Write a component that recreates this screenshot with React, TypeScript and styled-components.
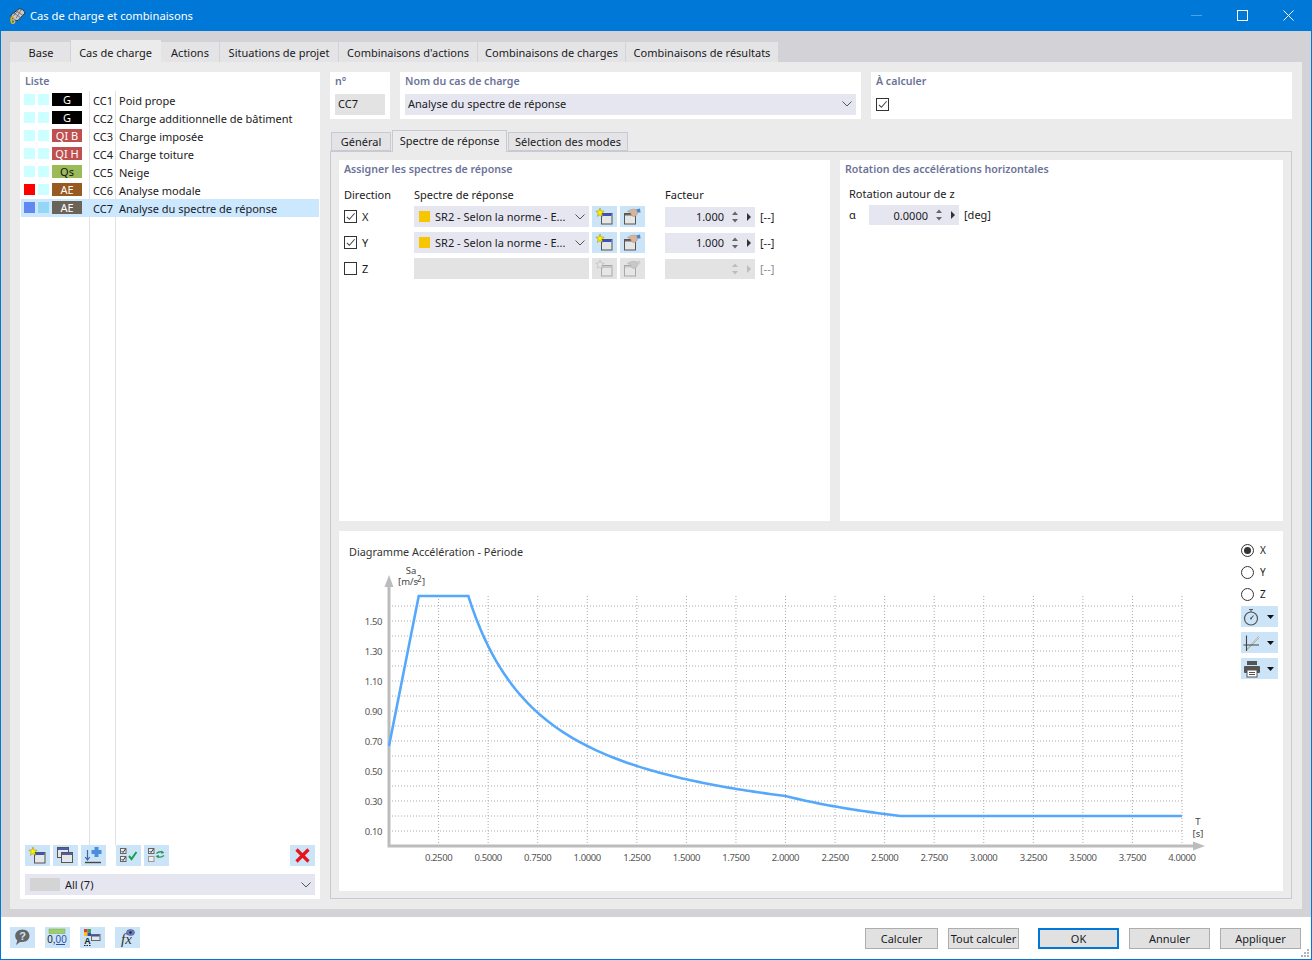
import { ReactNode } from 'react';
import { createGlobalStyle, styled } from 'styled-components';

const GlobalStyle = createGlobalStyle`
  html, body {
    margin: 0;
    padding: 0;
    background: #fff;
  }
  * {
    box-sizing: border-box;
  }
  body {
    font-family: "Noto Sans", "Liberation Sans", sans-serif;
    font-size: 11px;
    color: #1a1a22;
  }
`;

const Window = styled.div`
  width: 1312px;
  height: 960px;
  display: flex;
  flex-direction: column;
  border: 1px solid #0078d7;
  border-top: 0;
  overflow: hidden;
`;

const TitleBar = styled.div`
  height: 31px;
  flex: none;
  background: #0078d7;
  color: #fff;
  display: flex;
  align-items: center;
  padding-left: 7px;
  font-size: 11.2px;
`;

const TitleText = styled.span`
  margin-left: 4px;
  flex: 1;
`;

const WinControl = styled.div`
  width: 46px;
  height: 31px;
  display: flex;
  align-items: center;
  justify-content: center;
`;

const Body = styled.div`
  flex: 1;
  background: #d2d2d7;
  padding: 9px 9px 8px;
  display: flex;
  flex-direction: column;
  min-height: 0;
`;

const TabBar = styled.div`
  display: flex;
  align-items: flex-end;
  height: 22px;
  flex: none;
`;

const Tab = styled.div<{ $active?: boolean; $w: number }>`
  width: ${(p) => p.$w}px;
  height: ${(p) => (p.$active ? 22 : 20)}px;
  background: ${(p) => (p.$active ? '#ebebeb' : '#e4e4e6')};
  border-right: 1px solid ${(p) => (p.$active ? '#ebebeb' : '#d2d2d7')};
  padding-top: ${(p) => (p.$active ? 2 : 0)}px;
  display: flex;
  align-items: center;
  justify-content: center;
  white-space: nowrap;
  &:first-child {
    padding-left: 2px;
  }
`;

const MainPanel = styled.div`
  flex: 1;
  min-height: 0;
  background: #ebebeb;
  padding: 10px;
  display: flex;
  gap: 10px;
`;

const ListCard = styled.div`
  width: 300px;
  flex: none;
  background: #fff;
  display: flex;
  flex-direction: column;
  padding: 1px 1px 4px;
`;

const GroupTitle = styled.div`
  color: #6c7398;
  font-weight: 600;
  font-size: 10.6px;
  line-height: 16px;
  white-space: nowrap;
`;

const ListTitle = styled(GroupTitle)`
  padding: 0 0 0 4px;
  height: 18px;
`;

const ListArea = styled.div`
  flex: 1;
  min-height: 0;
  background-image: linear-gradient(#e2e2e2, #e2e2e2), linear-gradient(#e2e2e2, #e2e2e2);
  background-size: 1px 100%, 1px 100%;
  background-position: 68px 0, 94px 0;
  background-repeat: no-repeat;
`;

const ListRow = styled.div<{ $selected?: boolean }>`
  height: 18px;
  display: flex;
  align-items: center;
  padding-left: 3px;
  background: ${(p) => (p.$selected ? '#cce8ff' : 'transparent')};
  white-space: nowrap;
`;

const Swatch = styled.span<{ $color: string }>`
  width: 11px;
  height: 11px;
  margin: 0 3px 1px 0;
  flex: none;
  background: ${(p) => p.$color};
`;

const Badge = styled.span<{ $bg: string; $fg: string }>`
  width: 30px;
  height: 13px;
  margin-bottom: 1px;
  flex: none;
  background: ${(p) => p.$bg};
  color: ${(p) => p.$fg};
  display: flex;
  align-items: center;
  justify-content: center;
  line-height: 13px;
`;

const RowCode = styled.span`
  width: 26px;
  margin-left: 11px;
  flex: none;
`;

const ListTools = styled.div`
  display: flex;
  align-items: center;
  height: 21px;
  margin: 0 4px 8px;
`;

const ToolGroup = styled.div<{ $push?: boolean }>`
  display: flex;
  gap: 3px;
  margin-right: 10px;
  ${(p) => (p.$push ? 'margin: 0 0 0 auto;' : '')}
`;

const IconBtn = styled.div<{ $disabled?: boolean }>`
  width: 25px;
  height: 21px;
  flex: none;
  background: ${(p) => (p.$disabled ? '#e3e3e3' : '#cbe4f8')};
  display: flex;
  align-items: center;
  justify-content: center;
`;

const FilterSelect = styled.div`
  height: 21px;
  margin: 0 4px;
  background: #e6e6f0;
  display: flex;
  align-items: center;
  padding: 0 3px 0 5px;
`;

const FilterSwatch = styled.span`
  width: 30px;
  height: 13px;
  background: #d4d4d4;
  margin-right: 5px;
`;

const Grow = styled.span`
  flex: 1;
  white-space: nowrap;
  overflow: hidden;
`;

const RightColumn = styled.div`
  flex: 1;
  min-width: 0;
  display: flex;
  flex-direction: column;
`;

const HeaderRow = styled.div`
  height: 47px;
  flex: none;
  display: flex;
  gap: 10px;
`;

const HeaderCard = styled.div<{ $w?: number }>`
  ${(p) => (p.$w ? `width: ${p.$w}px; flex: none;` : 'flex: 1;')}
  background: #fff;
  padding: 1px 5px 0;
`;

const Field = styled.div<{ $disabled?: boolean }>`
  height: 21px;
  background: ${(p) => (p.$disabled ? '#e3e3e3' : '#e6e6f0')};
  display: flex;
  align-items: center;
  padding: 0 3px 0 3px;
  white-space: nowrap;
  color: #1a1a22;
`;

const HeaderField = styled(Field)`
  margin-top: 5px;
  padding-bottom: 2px;
`;

const HeaderCheck = styled.div`
  margin-top: 9px;
`;

const SubTabBar = styled.div`
  height: 21px;
  margin-top: 11px;
  flex: none;
  display: flex;
  align-items: flex-end;
  padding-left: 1px;
`;

const SubTab = styled.div<{ $active?: boolean; $w: number }>`
  width: ${(p) => p.$w}px;
  height: ${(p) => (p.$active ? 22 : 19)}px;
  margin-bottom: ${(p) => (p.$active ? -1 : 0)}px;
  padding-bottom: ${(p) => (p.$active ? 2 : 0)}px;
  background: ${(p) => (p.$active ? '#ebebeb' : '#e4e4e6')};
  border: 1px solid #c9c9d1;
  border-bottom: ${(p) => (p.$active ? 0 : '')};
  margin-right: 1px;
  display: flex;
  align-items: center;
  justify-content: center;
  white-space: nowrap;
  position: relative;
`;

const SubPanel = styled.div`
  flex: 1;
  min-height: 0;
  border: 1px solid #c9c9d1;
  padding: 8px 8px 7px;
  display: flex;
  flex-direction: column;
  gap: 10px;
`;

const UpperRow = styled.div`
  height: 361px;
  flex: none;
  display: flex;
  gap: 10px;
`;

const SpectrumCard = styled.div`
  width: 491px;
  flex: none;
  background: #fff;
  padding: 1px 5px;
`;

const RotationCard = styled.div`
  flex: 1;
  background: #fff;
  padding: 1px 5px;
`;

const ColumnHeads = styled.div`
  display: grid;
  grid-template-columns: 70px 251px auto;
  margin-top: 10px;
  height: 16px;
  line-height: 16px;
`;

const Rows = styled.div`
  display: flex;
  flex-direction: column;
  gap: 5px;
  margin-top: 3px;
`;

const AssignRow = styled.div`
  display: flex;
  align-items: center;
  height: 21px;
`;

const CheckLabel = styled.label`
  width: 70px;
  flex: none;
  display: flex;
  align-items: center;
  gap: 5px;
`;

const CheckBox = styled.span`
  width: 13px;
  height: 13px;
  border: 1px solid #333;
  background: #fff;
  display: flex;
  align-items: center;
  justify-content: center;
  flex: none;
`;

const SelectField = styled(Field)`
  width: 175px;
  flex: none;
  padding-left: 5px;
`;

const ColorDot = styled.span`
  width: 11px;
  height: 11px;
  background: #f7c600;
  margin-right: 5px;
  flex: none;
`;

const RowButtons = styled.div`
  display: flex;
  gap: 3px;
  margin: 0 20px 0 3px;
`;

const NumberField = styled.div<{ $disabled?: boolean }>`
  width: 90px;
  height: 20px;
  background: ${(p) => (p.$disabled ? '#e3e3e3' : '#e6e6f0')};
  display: flex;
  align-items: center;
  justify-content: flex-end;
  padding-right: 4px;
  flex: none;
`;

const NumberValue = styled.span`
  margin-right: 5px;
`;

const Unit = styled.span<{ $disabled?: boolean }>`
  margin-left: 5px;
  color: ${(p) => (p.$disabled ? '#8a8a9a' : 'inherit')};
`;

const RotationUnit = styled(Unit)`
  padding-bottom: 2px;
`;

const RotationLabel = styled.div`
  margin: 9px 0 0 4px;
  line-height: 16px;
`;

const RotationRow = styled.div`
  display: flex;
  align-items: center;
  margin: 3px 0 0 4px;
`;

const AlphaLabel = styled.span`
  width: 20px;
  padding-bottom: 2px;
`;

const ChartCard = styled.div`
  flex: 1;
  min-height: 0;
  background: #fff;
  display: flex;
  padding: 12px 5px 0 10px;
`;

const ChartArea = styled.div`
  flex: 1;
  min-width: 0;
`;

const ChartTitle = styled.div`
  font-size: 10.85px;
  line-height: 18px;
  color: #333;
`;

const ChartSvg = styled.svg`
  display: block;
  margin-top: 4px;
`;

const ChartControls = styled.div`
  width: 37px;
  flex: none;
  display: flex;
  flex-direction: column;
  margin-top: -4px;
`;

const RadioRow = styled.div`
  height: 22px;
  display: flex;
  align-items: center;
  gap: 6px;
  font-size: 10px;
`;

const Radio = styled.span<{ $on?: boolean }>`
  width: 13px;
  height: 13px;
  border: 1px solid #333;
  border-radius: 50%;
  display: flex;
  align-items: center;
  justify-content: center;
  &::after {
    content: '';
    width: 7px;
    height: 7px;
    border-radius: 50%;
    background: ${(p) => (p.$on ? '#333' : 'transparent')};
  }
`;

const ControlStack = styled.div`
  display: flex;
  flex-direction: column;
  gap: 5px;
  margin-top: 1px;
`;

const DropBtn = styled.div`
  width: 37px;
  height: 21px;
  background: #cbe4f8;
  display: flex;
  align-items: center;
  padding-left: 2px;
  gap: 6px;
`;

const Footer = styled.div`
  height: 42px;
  flex: none;
  background: #fff;
  display: flex;
  align-items: center;
  padding: 0 10px 0 9px;
  position: relative;
`;

const FooterIcons = styled.div`
  display: flex;
  gap: 10px;
  flex: 1;
  margin-bottom: 1px;
`;

const FooterBtn = styled.div<{ $w: number; $primary?: boolean; $gap?: number }>`
  width: ${(p) => p.$w}px;
  height: 21px;
  margin-left: ${(p) => p.$gap ?? 10}px;
  background: #e1e1e1;
  border: ${(p) => (p.$primary ? '2px solid #0078d7' : '1px solid #adadad')};
  display: flex;
  align-items: center;
  justify-content: center;
  white-space: nowrap;
`;

const Grip = styled.svg`
  position: absolute;
  right: 1px;
  bottom: 1px;
`;

const FixedSvg = styled.svg`
  flex: none;
`;

/* ---- icons ---- */

const Check = () => (
  <svg width="11" height="11" viewBox="0 0 12 12">
    <path d="M2 6.5 L4.8 9 L10.5 2.5" fill="none" stroke="#444" strokeWidth="1.1" />
  </svg>
);

const Chevron = () => (
  <FixedSvg width="12" height="8" viewBox="0 0 12 8">
    <path d="M1.5 1.5 L6 6 L10.5 1.5" fill="none" stroke="#555" strokeWidth="1" />
  </FixedSvg>
);

const Spin = ({ faded }: { faded?: boolean }) => (
  <FixedSvg width="22" height="14" viewBox="0 0 22 14">
    <path d="M3 5 L6 1.5 L9 5 Z M3 9 L6 12.5 L9 9 Z" fill={faded ? '#bdbdbd' : '#666'} />
    <path d="M18 3 L22 7 L18 11 Z" fill={faded ? '#bdbdbd' : '#333'} />
  </FixedSvg>
);

const Star = ({ fill, stroke }: { fill: string; stroke: string }) => (
  <path
    d="M8 2 L9.1 5 L12.2 5.2 L9.8 7.2 L10.6 10.4 L8 8.6 L5.4 10.4 L6.2 7.2 L3.8 5.2 L6.9 5 Z"
    fill={fill}
    stroke={stroke}
    strokeWidth="0.5"
  />
);

const NewIcon = ({ off }: { off?: boolean }) => (
  <svg width="25" height="21" viewBox="0 0 25 21">
    <rect x="9.5" y="7.5" width="10.5" height="10.5" fill="#e6e6e6" stroke={off ? '#a8a8a8' : '#555'} />
    <rect x="10" y="8" width="9.5" height="2" fill={off ? '#c8c8c8' : '#3553c4'} />
    <Star fill={off ? '#e6e6e6' : '#ffee00'} stroke={off ? '#aaa' : '#998800'} />
  </svg>
);

const PickIcon = ({ off }: { off?: boolean }) => (
  <svg width="25" height="21" viewBox="0 0 25 21">
    <rect x="4.5" y="7.5" width="11" height="10.5" fill="#e6e6e6" stroke={off ? '#a8a8a8' : '#555'} />
    <rect x="5" y="8" width="10" height="1.5" fill={off ? '#c8c8c8' : '#666'} />
    <path d="M16 3.5 L20 2.5 L20.5 6.5 L17.5 6.5 Z" fill={off ? '#cfcfcf' : '#4a86c8'} />
    <path
      d="M7.5 5.5 C9 4 12 3 15 3.2 L17 4.5 L17.5 7.5 C16.5 9.5 15 10.8 13 10.4 L11 8.5 L10.5 6.5 Z"
      fill={off ? '#c8c8c8' : '#d9b49c'}
      stroke={off ? '#aaa' : '#a98870'}
      strokeWidth="0.5"
    />
  </svg>
);

const CopyIcon = () => (
  <svg width="25" height="21" viewBox="0 0 25 21">
    <rect x="4.5" y="2.5" width="11" height="10" fill="#e6e6e6" stroke="#555" />
    <rect x="5" y="3" width="10" height="2" fill="#4a5fae" />
    <rect x="8.5" y="7.5" width="11" height="10" fill="#e6e6e6" stroke="#555" />
    <rect x="9" y="8" width="10" height="2" fill="#4a5fae" />
  </svg>
);

const ImportIcon = () => (
  <svg width="25" height="21" viewBox="0 0 25 21">
    <path d="M13.5 2 H17.5 V5 H20.5 V9 H17.5 V12 H13.5 V9 H10.5 V5 H13.5 Z" fill="#4a8ede" />
    <path d="M6.5 5 V15 M4.2 12 L6.5 15 L8.8 12" fill="none" stroke="#3c64a8" strokeWidth="1.2" />
    <path d="M4 17.5 H20" stroke="#444" strokeWidth="1.4" />
  </svg>
);

const CheckAllIcon = () => (
  <svg width="25" height="21" viewBox="0 0 25 21">
    <rect x="4.5" y="3.5" width="5.5" height="5" fill="#eee" stroke="#666" />
    <rect x="4.5" y="11.5" width="5.5" height="5" fill="#eee" stroke="#666" />
    <path d="M5.5 6 L7 7.5 L9.5 4 M5.5 14 L7 15.5 L9.5 12" fill="none" stroke="#333" />
    <path d="M13 11 L15.5 14 L20.5 7" fill="none" stroke="#16a34a" strokeWidth="2" />
  </svg>
);

const SwapIcon = () => (
  <svg width="25" height="21" viewBox="0 0 25 21">
    <rect x="4.5" y="3.5" width="5.5" height="5" fill="#eee" stroke="#666" />
    <rect x="4.5" y="11.5" width="5.5" height="5" fill="#eee" stroke="#999" />
    <path d="M5.5 6 L7 7.5 L9.5 4" fill="none" stroke="#333" />
    <path d="M12.5 8.5 Q15.5 5.5 19 7.5 M13 11 Q16.5 13.5 20 10.5" fill="none" stroke="#2b9a58" strokeWidth="1.4" />
    <path d="M17.5 5.5 L20.5 8 L17 8.8 Z M14.5 13.5 L11.5 11 L15 10 Z" fill="#2b9a58" />
  </svg>
);

const DeleteIcon = () => (
  <svg width="25" height="21" viewBox="0 0 25 21">
    <path d="M6.5 4.5 L18.5 16.5 M18.5 4.5 L6.5 16.5" stroke="#e8141c" strokeWidth="3.2" />
  </svg>
);

const HelpIcon = () => (
  <svg width="25" height="21" viewBox="0 0 25 21">
    <path
      d="M12.5 2.5 C16.5 2.5 19.5 5.3 19.5 8.8 C19.5 12.3 16.5 15 12.5 15 L10 15 L6 18 L7.3 13.5 C6 12.4 5.2 10.8 5.2 8.8 C5.2 5.3 8.5 2.5 12.5 2.5 Z"
      fill="#666"
    />
    <text x="12.5" y="13" textAnchor="middle" fontSize="11" fontWeight="700" fill="#cbe4f8" fontFamily="Liberation Sans, sans-serif">?</text>
  </svg>
);

const UnitsIcon = () => (
  <svg width="25" height="21" viewBox="0 0 25 21">
    <rect x="4" y="2" width="16" height="4.5" fill="#9ccf6a" stroke="#7aa850" strokeWidth="0.5" />
    <text x="12" y="16" textAnchor="middle" fontSize="10" fill="#222" fontFamily="Liberation Sans, sans-serif">
      0,<tspan fill="#2b50a8">00</tspan>
    </text>
    <path d="M11 17.5 H20" stroke="#2b50a8" />
  </svg>
);

const StyleIcon = () => (
  <svg width="25" height="21" viewBox="0 0 25 21">
    <rect x="4" y="2" width="3.5" height="3.5" fill="#e53935" />
    <rect x="7.5" y="2" width="3.5" height="3.5" fill="#43a047" />
    <rect x="4" y="5.5" width="3.5" height="3.5" fill="#f9c800" />
    <rect x="7.5" y="5.5" width="3.5" height="3.5" fill="#3949ab" />
    <text x="7.5" y="16.5" textAnchor="middle" fontSize="9" fontWeight="700" fill="#222" fontFamily="Liberation Sans, sans-serif">A</text>
    <path d="M4 18.5 H11.5" stroke="#222" strokeDasharray="1.5 1" />
    <rect x="11.5" y="7.5" width="8.5" height="6" fill="#e6e6e6" stroke="#666" />
    <rect x="12" y="8" width="7.5" height="1.5" fill="#3553c4" />
  </svg>
);

const FormulaIcon = () => (
  <svg width="25" height="21" viewBox="0 0 25 21">
    <text x="11.5" y="17" textAnchor="middle" fontSize="15" fontStyle="italic" fill="#333" fontFamily="Liberation Serif, serif">fx</text>
    <ellipse cx="15.5" cy="5.5" rx="4" ry="3" fill="#6a7bc8" stroke="#445" strokeWidth="0.5" />
    <circle cx="15.5" cy="5.5" r="1.2" fill="#223" />
  </svg>
);

const ClockIcon = () => (
  <svg width="18" height="18" viewBox="0 0 18 18">
    <circle cx="8" cy="10.5" r="6.5" fill="none" stroke="#555" strokeWidth="1.2" />
    <path d="M6 1.5 H10 M8 2 V4 M8 10.5 L10.5 7.5" fill="none" stroke="#555" strokeWidth="1.1" />
    <circle cx="8" cy="10.5" r="1" fill="#555" />
  </svg>
);

const AxesIcon = () => (
  <svg width="18" height="18" viewBox="0 0 18 18">
    <path d="M3 16 L16 2" stroke="#e0a0a0" />
    <path d="M4 16 L16 4" stroke="#8cc8a0" />
    <path d="M3.5 1.5 V17 M0.5 11 H16" stroke="#444" strokeWidth="1.1" fill="none" />
  </svg>
);

const PrintIcon = () => (
  <svg width="18" height="18" viewBox="0 0 18 18">
    <rect x="4" y="1" width="10" height="4" fill="#555" />
    <rect x="1" y="6" width="16" height="7" rx="1" fill="#555" />
    <rect x="4" y="10" width="10" height="7" fill="#fff" stroke="#555" />
    <path d="M6 12.5 H12 M6 14.5 H12" stroke="#555" />
  </svg>
);

const DropArrow = () => (
  <FixedSvg width="7" height="4" viewBox="0 0 7 4">
    <path d="M0 0 H7 L3.5 4 Z" fill="#111" />
  </FixedSvg>
);

const AppIcon = () => (
  <svg width="18" height="16" viewBox="0 0 18 16">
    <path d="M3 7 L11 0.8 C13.5 0.5 16.5 2.5 17 5 L10 12.5 C7 13 3.5 10.5 3 7 Z" fill="#c6c9d0" stroke="#333" strokeWidth="1" />
    <path d="M6 5 L13 10 M8.5 3 L15 7.5 M8 10.5 L13 2 M5 8.5 L10 2.5" stroke="#666" strokeWidth="0.8" />
    <text x="4.5" y="15.5" textAnchor="middle" fontSize="10" fontWeight="700" fill="#e6b422" fontFamily="Liberation Sans, sans-serif">6</text>
  </svg>
);

/* ---- data ---- */

const tabs = [
  { label: 'Base', w: 61 },
  { label: 'Cas de charge', w: 90, active: true },
  { label: 'Actions', w: 59 },
  { label: 'Situations de projet', w: 119 },
  { label: "Combinaisons d'actions", w: 139 },
  { label: 'Combinaisons de charges', w: 148 },
  { label: 'Combinaisons de résultats', w: 153 },
];

const CYAN = '#ccffff';

const loadCases = [
  { code: 'CC1', name: 'Poid prope', tag: 'G', bg: '#000', fg: '#fff', a: CYAN, b: CYAN },
  { code: 'CC2', name: 'Charge additionnelle de bâtiment', tag: 'G', bg: '#000', fg: '#fff', a: CYAN, b: CYAN },
  { code: 'CC3', name: 'Charge imposée', tag: 'QI B', bg: '#bf5050', fg: '#fff', a: CYAN, b: CYAN },
  { code: 'CC4', name: 'Charge toiture', tag: 'QI H', bg: '#bf5050', fg: '#fff', a: CYAN, b: CYAN },
  { code: 'CC5', name: 'Neige', tag: 'Qs', bg: '#9bbb59', fg: '#111', a: CYAN, b: CYAN },
  { code: 'CC6', name: 'Analyse modale', tag: 'AE', bg: '#975a20', fg: '#fff', a: '#ff0000', b: CYAN },
  { code: 'CC7', name: 'Analyse du spectre de réponse', tag: 'AE', bg: '#6b6358', fg: '#fff', a: '#6088f0', b: '#94d6f6', selected: true },
];

/* ---- chart ---- */

const X0 = 389;
const Y0 = 846;
const SX = 198.25;
const SY = 150;
const px = (t: number) => X0 + t * SX;
const py = (v: number) => Y0 - v * SY;

const spectrumPath = () => {
  const pts: string[] = [`${px(0)},${py(0.667)}`, `${px(0.15)},${py(1.667)}`, `${px(0.4)},${py(1.667)}`];
  for (let t = 0.42; t <= 2; t += 0.02) pts.push(`${px(t)},${py(0.6667 / t)}`);
  for (let t = 2; t <= 2.582; t += 0.02) pts.push(`${px(t)},${py(1.3333 / (t * t))}`);
  pts.push(`${px(2.582)},${py(0.2)}`, `${px(4)},${py(0.2)}`);
  return pts.join(' ');
};

const hGrid = Array.from({ length: 16 }, (_, i) => (i + 1) / 10);
const vGrid = Array.from({ length: 16 }, (_, i) => (i + 1) * 0.25);
const yLabels = [0.1, 0.3, 0.5, 0.7, 0.9, 1.1, 1.3, 1.5];

const Chart = () => (
  <ChartSvg width="861" height="305" viewBox="349 565 861 305" fontFamily='"Noto Sans", sans-serif' fontSize="9.5">
    {hGrid.map((v) => (
      <line key={v} x1={X0} x2={px(4)} y1={py(v)} y2={py(v)} stroke="#aaa" strokeDasharray="1 2" />
    ))}
    {vGrid.map((t) => (
      <line key={t} x1={px(t)} x2={px(t)} y1={596} y2={Y0 + 2} stroke="#aaa" strokeDasharray="1 2" />
    ))}
    <path d={`M${X0} ${Y0} V582 M${X0 - 1.5} ${Y0} H1196`} stroke="#bcbcbc" strokeWidth="3" fill="none" />
    <path d="M389 575 L393.5 587 H384.5 Z M1205 846 L1193 841.5 V850.5 Z" fill="#bcbcbc" />
    <polyline points={spectrumPath()} fill="none" stroke="#55a8fb" strokeWidth="2.6" />
    {yLabels.map((v) => (
      <text key={v} x={382} y={py(v) + 3.5} textAnchor="end" fill="#555" letterSpacing="-0.4">{v.toFixed(2)}</text>
    ))}
    {vGrid.map((t) => (
      <text key={t} x={px(t)} y={861} textAnchor="middle" fill="#555" letterSpacing="-0.4">{t.toFixed(4)}</text>
    ))}
    <text x={411} y={574} textAnchor="middle" fill="#444">Sa</text>
    <text x={398} y={585} fill="#444">[m/s</text>
    <text x={417} y={582} fontSize="8" fill="#444">2</text>
    <text x={422} y={585} fill="#444">]</text>
    <text x={1198} y={825} textAnchor="middle" fill="#444">T</text>
    <text x={1198} y={837} textAnchor="middle" fill="#444">[s]</text>
  </ChartSvg>
);

/* ---- rows ---- */

const ResponseRow = ({ axis, on }: { axis: string; on: boolean }): ReactNode => (
  <AssignRow>
    <CheckLabel>
      <CheckBox>{on && <Check />}</CheckBox>
      {axis}
    </CheckLabel>
    {on ? (
      <SelectField>
        <ColorDot />
        <Grow>SR2 - Selon la norme - E...</Grow>
        <Chevron />
      </SelectField>
    ) : (
      <SelectField $disabled />
    )}
    <RowButtons>
      <IconBtn $disabled={!on}><NewIcon off={!on} /></IconBtn>
      <IconBtn $disabled={!on}><PickIcon off={!on} /></IconBtn>
    </RowButtons>
    <NumberField $disabled={!on}>
      {on && <NumberValue>1.000</NumberValue>}
      <Spin faded={!on} />
    </NumberField>
    <Unit $disabled={!on}>[--]</Unit>
  </AssignRow>
);

const App = () => {
  return (
    <>
      <GlobalStyle />
      <Window>
        <TitleBar>
          <AppIcon />
          <TitleText>Cas de charge et combinaisons</TitleText>
          <WinControl>
            <svg width="11" height="11" viewBox="0 0 11 11">
              <path d="M0 5.5 H11" stroke="#4ea3e6" />
            </svg>
          </WinControl>
          <WinControl>
            <svg width="11" height="11" viewBox="0 0 11 11">
              <rect x="0.5" y="0.5" width="10" height="10" fill="none" stroke="#fff" />
            </svg>
          </WinControl>
          <WinControl>
            <svg width="11" height="11" viewBox="0 0 11 11">
              <path d="M0.5 0.5 L10.5 10.5 M10.5 0.5 L0.5 10.5" stroke="#fff" />
            </svg>
          </WinControl>
        </TitleBar>

        <Body>
          <TabBar>
            {tabs.map((t) => (
              <Tab key={t.label} $w={t.w} $active={t.active}>{t.label}</Tab>
            ))}
          </TabBar>

          <MainPanel>
            <ListCard>
              <ListTitle>Liste</ListTitle>
              <ListArea>
                {loadCases.map((c) => (
                  <ListRow key={c.code} $selected={c.selected}>
                    <Swatch $color={c.a} />
                    <Swatch $color={c.b} />
                    <Badge $bg={c.bg} $fg={c.fg}>{c.tag}</Badge>
                    <RowCode>{c.code}</RowCode>
                    <span>{c.name}</span>
                  </ListRow>
                ))}
              </ListArea>
              <ListTools>
                <ToolGroup>
                  <IconBtn><NewIcon /></IconBtn>
                  <IconBtn><CopyIcon /></IconBtn>
                  <IconBtn><ImportIcon /></IconBtn>
                </ToolGroup>
                <ToolGroup>
                  <IconBtn><CheckAllIcon /></IconBtn>
                  <IconBtn><SwapIcon /></IconBtn>
                </ToolGroup>
                <ToolGroup $push>
                  <IconBtn><DeleteIcon /></IconBtn>
                </ToolGroup>
              </ListTools>
              <FilterSelect>
                <FilterSwatch />
                <Grow>All (7)</Grow>
                <Chevron />
              </FilterSelect>
            </ListCard>

            <RightColumn>
              <HeaderRow>
                <HeaderCard $w={60}>
                  <GroupTitle>n°</GroupTitle>
                  <HeaderField $disabled>CC7</HeaderField>
                </HeaderCard>
                <HeaderCard $w={461}>
                  <GroupTitle>Nom du cas de charge</GroupTitle>
                  <HeaderField>
                    <Grow>Analyse du spectre de réponse</Grow>
                    <Chevron />
                  </HeaderField>
                </HeaderCard>
                <HeaderCard>
                  <GroupTitle>À calculer</GroupTitle>
                  <HeaderCheck>
                    <CheckBox><Check /></CheckBox>
                  </HeaderCheck>
                </HeaderCard>
              </HeaderRow>

              <SubTabBar>
                <SubTab $w={60}>Général</SubTab>
                <SubTab $w={115} $active>Spectre de réponse</SubTab>
                <SubTab $w={120}>Sélection des modes</SubTab>
              </SubTabBar>

              <SubPanel>
                <UpperRow>
                  <SpectrumCard>
                    <GroupTitle>Assigner les spectres de réponse</GroupTitle>
                    <ColumnHeads>
                      <span>Direction</span>
                      <span>Spectre de réponse</span>
                      <span>Facteur</span>
                    </ColumnHeads>
                    <Rows>
                      <ResponseRow axis="X" on />
                      <ResponseRow axis="Y" on />
                      <ResponseRow axis="Z" on={false} />
                    </Rows>
                  </SpectrumCard>
                  <RotationCard>
                    <GroupTitle>Rotation des accélérations horizontales</GroupTitle>
                    <RotationLabel>Rotation autour de z</RotationLabel>
                    <RotationRow>
                      <AlphaLabel>α</AlphaLabel>
                      <NumberField>
                        <NumberValue>0.0000</NumberValue>
                        <Spin />
                      </NumberField>
                      <RotationUnit>[deg]</RotationUnit>
                    </RotationRow>
                  </RotationCard>
                </UpperRow>

                <ChartCard>
                  <ChartArea>
                    <ChartTitle>Diagramme Accélération - Période</ChartTitle>
                    <Chart />
                  </ChartArea>
                  <ChartControls>
                    <RadioRow><Radio $on />X</RadioRow>
                    <RadioRow><Radio />Y</RadioRow>
                    <RadioRow><Radio />Z</RadioRow>
                    <ControlStack>
                      <DropBtn><ClockIcon /><DropArrow /></DropBtn>
                      <DropBtn><AxesIcon /><DropArrow /></DropBtn>
                      <DropBtn><PrintIcon /><DropArrow /></DropBtn>
                    </ControlStack>
                  </ChartControls>
                </ChartCard>
              </SubPanel>
            </RightColumn>
          </MainPanel>
        </Body>

        <Footer>
          <FooterIcons>
            <IconBtn><HelpIcon /></IconBtn>
            <IconBtn><UnitsIcon /></IconBtn>
            <IconBtn><StyleIcon /></IconBtn>
            <IconBtn><FormulaIcon /></IconBtn>
          </FooterIcons>
          <FooterBtn $w={73}>Calculer</FooterBtn>
          <FooterBtn $w={71}>Tout calculer</FooterBtn>
          <FooterBtn $w={81} $gap={19} $primary>OK</FooterBtn>
          <FooterBtn $w={81}>Annuler</FooterBtn>
          <FooterBtn $w={81}>Appliquer</FooterBtn>
          <Grip width="10" height="10" viewBox="0 0 10 10">
            <path d="M7 1h2v2H7z M4 4h2v2H4z M7 4h2v2H7z M1 7h2v2H1z M4 7h2v2H4z M7 7h2v2H7z" fill="#b4b4b4" />
          </Grip>
        </Footer>
      </Window>
    </>
  );
};

export default App;
